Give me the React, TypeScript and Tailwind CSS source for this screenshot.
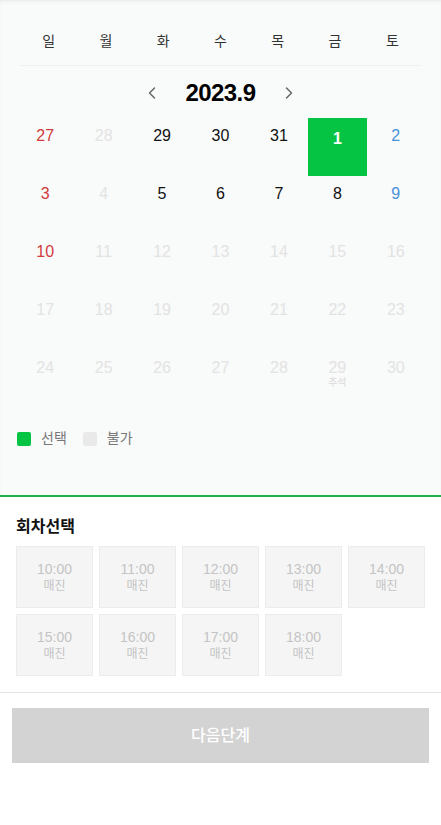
import { ChevronLeft, ChevronRight } from "lucide-react";

type Day = {
  label: number;
  tone: "sun" | "sat" | "normal" | "off";
  selected?: boolean;
  note?: string;
};

const WEEKDAYS = ["일", "월", "화", "수", "목", "금", "토"];

// 2023년 9월 달력 (8월 말 포함)
const DAYS: Day[] = [
  { label: 27, tone: "sun" },
  { label: 28, tone: "off" },
  { label: 29, tone: "normal" },
  { label: 30, tone: "normal" },
  { label: 31, tone: "normal" },
  { label: 1, tone: "normal", selected: true },
  { label: 2, tone: "sat" },
  { label: 3, tone: "sun" },
  { label: 4, tone: "off" },
  { label: 5, tone: "normal" },
  { label: 6, tone: "normal" },
  { label: 7, tone: "normal" },
  { label: 8, tone: "normal" },
  { label: 9, tone: "sat" },
  { label: 10, tone: "sun" },
  ...[11, 12, 13, 14, 15, 16, 17, 18, 19, 20, 21, 22, 23, 24, 25, 26, 27, 28].map(
    (n) => ({ label: n, tone: "off" as const })
  ),
  { label: 29, tone: "off", note: "추석" },
  { label: 30, tone: "off" },
];

const TIMES = ["10:00", "11:00", "12:00", "13:00", "14:00", "15:00", "16:00", "17:00", "18:00"];

const toneClass: Record<Day["tone"], string> = {
  sun: "text-[#d23c3c]",
  sat: "text-[#4a90d9]",
  normal: "text-[#111]",
  off: "text-[#e3e3e3]",
};

export default function App() {
  return (
    <div
      className="w-[441px] min-h-[825px] bg-white"
      style={{ fontFamily: '"Liberation Sans", "Noto Sans CJK KR", sans-serif' }}
    >
      {/* Calendar */}
      <section className="bg-[#f9fafa] border-t border-[#eeeeee] shadow-[inset_0_2px_3px_rgba(0,0,0,0.03)] border-b-2 border-b-[#1fb24a]">
        <div className="px-4 pt-[30px]">
          <div className="grid grid-cols-7 text-center text-[14px] text-[#333] pb-[13px] border-b border-[#eeefef] mx-1">
            {WEEKDAYS.map((w) => (
              <span key={w}>{w}</span>
            ))}
          </div>

          <div className="flex items-center justify-center h-[52px] pt-[2px]">
            <ChevronLeft className="w-5 h-5 text-[#666]" strokeWidth={1.75} />
            <span className="mx-[24px] text-[24px] font-bold text-black tracking-tight">2023.9</span>
            <ChevronRight className="w-5 h-5 text-[#666]" strokeWidth={1.75} />
          </div>

          <div className="grid grid-cols-7">
            {DAYS.map((d, i) => (
              <div key={i} className="h-[58px] flex flex-col items-center">
                {d.selected ? (
                  <div className="w-full h-full bg-[#05c443] text-white font-bold text-[16px] flex justify-center pt-[9px]">
                    {d.label}
                  </div>
                ) : (
                  <>
                    <span className={`text-[16px] pt-[9px] leading-[18px] ${toneClass[d.tone]}`}>{d.label}</span>
                    {d.note && <span className="text-[10px] leading-[12px] text-[#d9d9d9]">{d.note}</span>}
                  </>
                )}
              </div>
            ))}
          </div>

          <div className="flex items-center gap-2 text-[14px] text-[#777] pt-[20px] pb-[46px] px-[1px]">
            <span className="w-[14px] h-[14px] rounded-[2px] bg-[#05c443]" />
            <span className="mr-[8px] ml-[2px]">선택</span>
            <span className="w-[14px] h-[14px] rounded-[2px] bg-[#e9e9e9]" />
            <span className="ml-[2px]">불가</span>
          </div>
        </div>
      </section>

      {/* Time slots */}
      <section className="px-4 pt-[19px] pb-[16px] border-b border-[#e5e5e5]">
        <h2 className="text-[16px] font-bold text-[#111] leading-[22px]">회차선택</h2>
        <div className="grid grid-cols-5 gap-[6px] mt-[8px]">
          {TIMES.map((t) => (
            <div
              key={t}
              className="h-[62px] bg-[#f5f5f5] border border-[#ececec] flex flex-col items-center justify-center text-[#c4c4c4]"
            >
              <span className="text-[14px] leading-[17px]">{t}</span>
              <span className="text-[12px] leading-[16px]">매진</span>
            </div>
          ))}
        </div>
      </section>

      {/* Next */}
      <div className="px-3 pt-[15px]">
        <button
          type="button"
          disabled
          className="w-full h-[55px] bg-[#d3d3d3] text-white text-[16px] font-medium"
        >
          다음단계
        </button>
      </div>
    </div>
  );
}
